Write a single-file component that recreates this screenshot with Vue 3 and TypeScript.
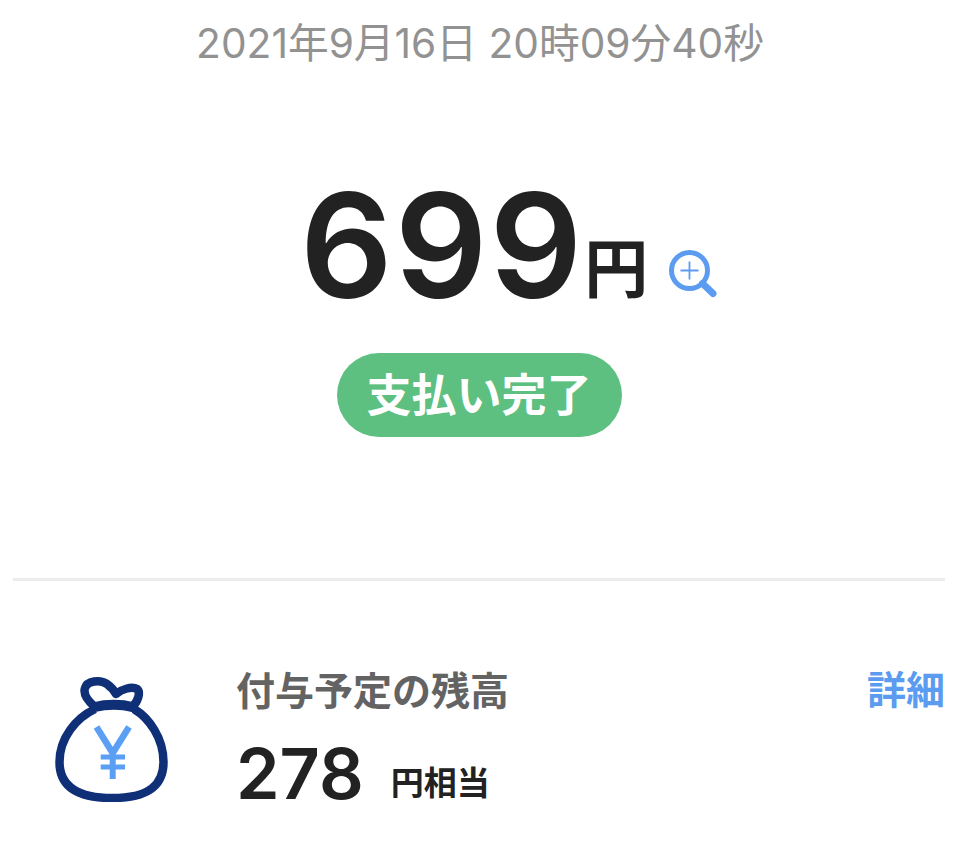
<script setup lang="ts">
const date = '2021年9月16日 20時09分40秒'
</script>

<template>
  <main class="page">
    <div class="date">{{ date }}</div>
    <div class="amount">
      <span class="num">699</span>
      <span class="unit">円</span>
      <svg class="zoom" viewBox="0 0 50 50" width="50" height="50" fill="none">
        <circle cx="20.500" cy="20.500" r="18" stroke="#5b9bf0" stroke-width="5" />
        <path d="M33.500 33.500 L44 43.500" stroke="#5b9bf0" stroke-width="7" stroke-linecap="round" />
        <path d="M11.500 20.500 H29.500 M20.500 11.500 V29.500" stroke="#5b9bf0" stroke-width="1.800" />
      </svg>
    </div>
    <div class="status-wrap"><div class="status">支払い完了</div></div>
    <div class="divider"></div>
    <section class="row">
      <svg class="bag" viewBox="0 0 114 126" width="114" height="126" fill="none">
        <path d="M41 33 C22 42 5.500 62 5.500 86 C5.500 108 20 122 58 122 C96 122 109.500 108 109.500 86 C109.500 62 95 42 80 33" stroke="#0f2f77" stroke-width="8.500" />
        <path d="M41 31 C34 25 29 18 31 12 C33 5 46 3 53 8 C57 11 60 14 62 18 C68 13 78 10 83 13 C87 16 84 26 78 31" stroke="#0f2f77" stroke-width="8.500" stroke-linejoin="round" />
        <path d="M41 31 C52 28 68 28 78 31" stroke="#0f2f77" stroke-width="10" stroke-linecap="round" />
        <path d="M42.500 51 L58.700 77 L75 51" stroke="#5b9ff5" stroke-width="6.500" />
        <path d="M58.700 76 V103" stroke="#5b9ff5" stroke-width="6" />
        <path d="M46.700 81 H71 M46.700 91 H71" stroke="#5b9ff5" stroke-width="5" />
      </svg>
      <div class="info">
        <div class="label">付与予定の残高</div>
        <div class="value"><span class="big">278</span><span class="small">円相当</span></div>
      </div>
      <a class="detail">詳細</a>
    </section>
  </main>
</template>

<style>
html, body { margin: 0; background: #fff; }
</style>

<style scoped>
.page {
  width: 960px;
  height: 857px;
  box-sizing: border-box;
  padding-top: 20px;
  overflow: hidden;
}
.date {
  text-align: center;
  font-family: "Inter", "Noto Sans CJK JP", sans-serif;
  font-size: 40.700px;
  line-height: 48px;
  color: #929292;
}
.amount {
  margin-top: 108px;
  height: 140px;
  display: flex;
  align-items: flex-end;
  padding-left: 300px;
}
.num {
  font-family: "Inter", sans-serif;
  font-size: 145px;
  font-weight: 600;
  line-height: 140px;
  color: #222;
  letter-spacing: 2px;
}
.unit {
  font-family: "Noto Sans CJK JP", sans-serif;
  font-size: 64px;
  font-weight: 700;
  line-height: 104px;
  color: #222;
}
.zoom { margin: 0 0 16px 21px; }
.status-wrap { display: flex; justify-content: center; margin: 37px 2px 0 0; }
.status {
  width: 285px;
  height: 84px;
  border-radius: 42px;
  background: #5dbf80;
  color: #fff;
  font-family: "Noto Sans CJK JP", sans-serif;
  font-size: 45px;
  font-weight: 700;
  line-height: 80px;
  text-align: center;
}
.divider {
  height: 3px;
  margin: 141px 15px 0 13px;
  background: #ececec;
}
.row {
  position: relative;
  display: flex;
  margin: 95px 15px 0 54px;
}
.bag { flex: none; }
.info { margin-left: 68px; margin-top: -12px; }
.label {
  font-family: "Noto Sans CJK JP", sans-serif;
  font-size: 39px;
  font-weight: 700;
  line-height: 48px;
  color: #636363;
}
.value { margin-top: 22px; line-height: 80px; }
.big {
  font-family: "Inter", sans-serif;
  font-size: 70px;
  font-weight: 600;
  color: #222;
}
.small {
  font-family: "Noto Sans CJK JP", sans-serif;
  font-size: 33px;
  font-weight: 700;
  color: #222;
  margin-left: 27px;
  vertical-align: 4px;
}
.detail {
  margin-left: auto;
  margin-top: -13px;
  font-family: "Noto Sans CJK JP", sans-serif;
  font-size: 39px;
  font-weight: 700;
  line-height: 48px;
  color: #5b9bf0;
}
</style>
